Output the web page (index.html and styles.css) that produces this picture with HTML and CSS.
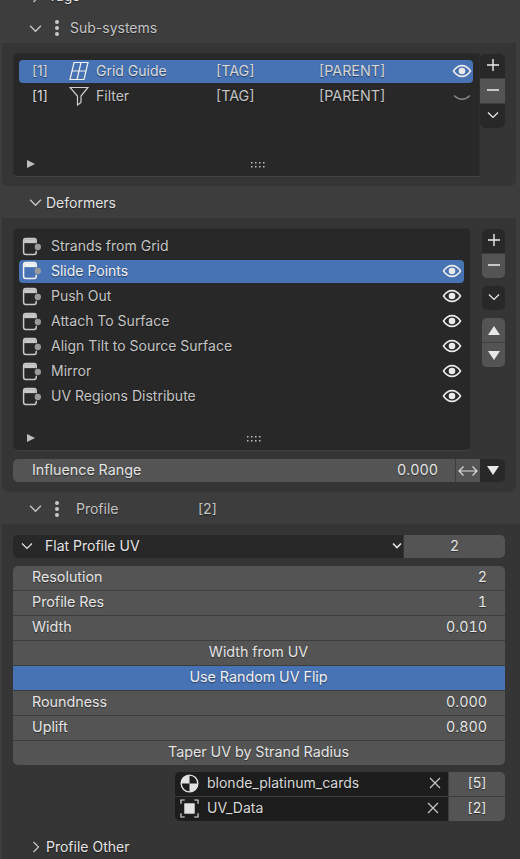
FILE: index.html
```html
<!DOCTYPE html>
<html lang="en">
  <head>
    <meta charset="utf-8" />
    <meta name="viewport" content="width=device-width, initial-scale=1.0" />
    <title>Hair Modifier Panel</title>
    <link rel="stylesheet" href="styles.css">
  </head>
  <body>
    <svg class="defs" width="0" height="0">
      <symbol id="eye" viewBox="0 0 20 14">
        <path d="M1.5 7C4 3.2 7 1.6 10 1.6S16 3.2 18.500 7C16 10.800 13 12.400 10 12.400S4 10.800 1.500 7Z" fill="none" stroke="currentColor" stroke-width="1.600"/>
        <circle cx="10" cy="7" r="3.300" fill="currentColor"/>
      </symbol>
      <symbol id="mod" viewBox="0 0 18 18">
        <path d="M13.500 6V3.500Q13.500 1.500 11.500 1.500H3.500Q1.500 1.500 1.500 3.500V14.500Q1.500 16.500 3.500 16.500H11.500Q13.500 16.500 13.500 14.500V13" fill="none" stroke="currentColor" stroke-width="1.400"/>
        <path d="M2 2H13V5.800H2Z" fill="currentColor"/>
        <circle cx="15" cy="9.500" r="3" class="mod-dot"/>
      </symbol>
      <symbol id="chev" viewBox="0 0 12 8">
        <path d="M1 1.500L6 6.500L11 1.500" fill="none" stroke="currentColor" stroke-width="1.200"/>
      </symbol>
      <symbol id="chev-small" viewBox="0 0 10 7">
        <path d="M1 1.500L5 5.500L9 1.500" fill="none" stroke="currentColor" stroke-width="1.600"/>
      </symbol>
      <symbol id="plus" viewBox="0 0 14 14">
        <path d="M1 7H13M7 1V13" fill="none" stroke="currentColor" stroke-width="1.400"/>
      </symbol>
      <symbol id="minus" viewBox="0 0 14 14">
        <path d="M1 7H13" fill="none" stroke="currentColor" stroke-width="1.400"/>
      </symbol>
      <symbol id="cross" viewBox="0 0 12 12">
        <path d="M1 1L11 11M11 1L1 11" fill="none" stroke="currentColor" stroke-width="1.200"/>
      </symbol>
      <symbol id="dots" viewBox="0 0 6 18">
        <circle cx="3" cy="3" r="2"/><circle cx="3" cy="9" r="2"/><circle cx="3" cy="15" r="2"/>
      </symbol>
      <symbol id="grip" viewBox="0 0 14 6">
        <path d="M0 0h1.500v1.500H0zM4 0h1.500v1.500H4zM8 0h1.500v1.500H8zM12 0h1.500v1.500H12zM0 4h1.500v1.500H0zM4 4h1.500v1.500H4zM8 4h1.500v1.500H8zM12 4h1.500v1.500H12z" fill="currentColor"/>
      </symbol>
    </svg>

    <div class="tags-head">
      <svg class="chev-right tags-chev" viewBox="0 0 8 12"><path d="M1.500 1L6.500 6L1.500 11" fill="none" stroke="currentColor" stroke-width="1.200"/></svg>
      <span class="tags-text">Tags</span>
    </div>

    <div class="head head-sub">
      <svg class="chev"><use href="#chev"/></svg>
      <svg class="dots"><use href="#dots"/></svg>
      <span class="muted sub-title">Sub-systems</span>
    </div>
    <section class="body body-sub">
      <div class="list-wrap">
        <div class="list list-sub">
          <div class="row sub-row selected">
            <span class="soft">[1]</span>
            <svg class="row-icon" viewBox="0 0 20 20"><path d="M5 1.500H19L15 18.500H1ZM12 1.500L8 18.500M3 10H17" fill="none" stroke="currentColor" stroke-width="1.200"/></svg>
            <span>Grid Guide</span>
            <span class="soft">[TAG]</span>
            <span class="soft">[PARENT]</span>
            <svg class="eye"><use href="#eye"/></svg>
          </div>
          <div class="row sub-row">
            <span>[1]</span>
            <svg class="row-icon" viewBox="0 0 20 20"><path d="M1 1.500H19L12 10V16.500L8.500 19V10Z" fill="none" stroke="currentColor" stroke-width="1.200"/></svg>
            <span class="muted">Filter</span>
            <span class="muted">[TAG]</span>
            <span class="muted">[PARENT]</span>
            <svg class="eye-off" viewBox="0 0 20 8"><path d="M2 1.500Q10 9 18 1.500" fill="none" stroke="currentColor" stroke-width="1.200"/></svg>
          </div>
          <div class="list-foot">
            <span class="tri-right"></span>
            <svg class="grip"><use href="#grip"/></svg>
          </div>
        </div>
        <div class="side side-sub">
          <div class="btn-group">
            <div class="btn dark"><svg class="btn-sign"><use href="#plus"/></svg></div>
            <div class="btn"><svg class="btn-sign"><use href="#minus"/></svg></div>
            <div class="btn dark"><svg class="btn-chev"><use href="#chev"/></svg></div>
          </div>
        </div>
      </div>
    </section>

    <div class="head head-def">
      <svg class="chev"><use href="#chev"/></svg>
      <span class="def-title">Deformers</span>
    </div>
    <section class="body body-def">
      <div class="list-wrap">
        <div class="list list-def">
          <div class="row def-row">
            <svg class="mod-icon"><use href="#mod"/></svg>
            <span class="muted">Strands from Grid</span>
          </div>
          <div class="row def-row selected">
            <svg class="mod-icon"><use href="#mod"/></svg>
            <span>Slide Points</span>
            <svg class="eye"><use href="#eye"/></svg>
          </div>
          <div class="row def-row">
            <svg class="mod-icon"><use href="#mod"/></svg>
            <span class="muted">Push Out</span>
            <svg class="eye"><use href="#eye"/></svg>
          </div>
          <div class="row def-row">
            <svg class="mod-icon"><use href="#mod"/></svg>
            <span class="muted">Attach To Surface</span>
            <svg class="eye"><use href="#eye"/></svg>
          </div>
          <div class="row def-row">
            <svg class="mod-icon"><use href="#mod"/></svg>
            <span class="muted">Align Tilt to Source Surface</span>
            <svg class="eye"><use href="#eye"/></svg>
          </div>
          <div class="row def-row">
            <svg class="mod-icon"><use href="#mod"/></svg>
            <span class="muted">Mirror</span>
            <svg class="eye"><use href="#eye"/></svg>
          </div>
          <div class="row def-row">
            <svg class="mod-icon"><use href="#mod"/></svg>
            <span class="muted">UV Regions Distribute</span>
            <svg class="eye"><use href="#eye"/></svg>
          </div>
          <div class="list-foot">
            <span class="tri-right"></span>
            <svg class="grip"><use href="#grip"/></svg>
          </div>
        </div>
        <div class="side side-def">
          <div class="btn-group">
            <div class="btn dark"><svg class="btn-sign"><use href="#plus"/></svg></div>
            <div class="btn"><svg class="btn-sign"><use href="#minus"/></svg></div>
          </div>
          <div class="btn-group">
            <div class="btn dark"><svg class="btn-chev"><use href="#chev"/></svg></div>
          </div>
          <div class="btn-group">
            <div class="btn"><span class="tri-up"></span></div>
            <div class="btn"><span class="tri-down"></span></div>
          </div>
        </div>
      </div>
      <div class="influence">
        <div class="field">
          <span>Influence Range</span>
          <span>0.000</span>
        </div>
        <div class="range-btn">
          <svg viewBox="0 0 20 12" width="20" height="12"><path d="M1 6H19M5.500 1.500L1 6L5.500 10.500M14.500 1.500L19 6L14.500 10.500" fill="none" stroke="currentColor" stroke-width="1.200"/></svg>
        </div>
        <div class="range-drop"><span class="tri-down"></span></div>
      </div>
    </section>

    <div class="head head-profile">
      <svg class="chev"><use href="#chev"/></svg>
      <svg class="dots"><use href="#dots"/></svg>
      <span class="muted profile-title">Profile</span>
      <span class="muted">[2]</span>
    </div>
    <section class="body body-profile">
      <div class="profile-select">
        <div class="select">
          <svg class="select-chev"><use href="#chev"/></svg>
          <span>Flat Profile UV</span>
          <svg class="select-end"><use href="#chev-small"/></svg>
        </div>
        <div class="select-count">2</div>
      </div>
      <div class="stack">
        <div class="stack-row"><span>Resolution</span><span>2</span></div>
        <div class="stack-row"><span>Profile Res</span><span>1</span></div>
        <div class="stack-row"><span>Width</span><span>0.010</span></div>
        <div class="stack-row center">Width from UV</div>
        <div class="stack-row center on">Use Random UV Flip</div>
        <div class="stack-row"><span>Roundness</span><span>0.000</span></div>
        <div class="stack-row"><span>Uplift</span><span>0.800</span></div>
        <div class="stack-row center">Taper UV by Strand Radius</div>
      </div>
      <div class="data">
        <div class="data-row">
          <div class="data-name">
            <svg class="data-icon" viewBox="0 0 20 20"><circle cx="10" cy="10" r="8.800" fill="none" stroke="currentColor" stroke-width="1.400"/><path d="M10 1.200A8.800 8.800 0 0 0 1.200 10H10ZM10 10V18.800A8.800 8.800 0 0 0 18.800 10Z" fill="currentColor"/></svg>
            <span class="data-label">blonde_platinum_cards</span>
            <svg class="data-x"><use href="#cross"/></svg>
          </div>
          <div class="data-count">[5]</div>
        </div>
        <div class="data-row">
          <div class="data-name">
            <svg class="data-icon" viewBox="0 0 20 20"><path d="M1 5V1H5M15 1H19V5M19 15V19H15M5 19H1V15" fill="none" stroke="currentColor" stroke-width="1.200"/><rect x="4.500" y="4.500" width="11" height="11" fill="currentColor"/></svg>
            <span class="data-label">UV_Data</span>
            <svg class="data-x uv-x"><use href="#cross"/></svg>
          </div>
          <div class="data-count">[2]</div>
        </div>
      </div>
      <div class="other">
        <svg class="chev-right" viewBox="0 0 8 12"><path d="M1.500 1L6.500 6L1.500 11" fill="none" stroke="currentColor" stroke-width="1.200"/></svg>
        <span>Profile Other</span>
      </div>
    </section>
  </body>
</html>
```

FILE: styles.css
```css
html,
body {
  margin: 0;
  height: 859px;
  overflow: hidden;
}

body {
  background-color: #3d3d3d;
  color: #e4e4e4;
  font-family: Inter, "Liberation Sans", sans-serif;
  font-size: 14px;
  line-height: 18px;
  text-shadow: 0 1px 1px rgba(0, 0, 0, 0.45);
}

svg {
  flex: none;
}

.defs {
  position: absolute;
}

.mod-dot {
  fill: #9a9a9a;
}

.muted {
  color: #c4c4c4;
}

.soft {
  color: #d6d6d6;
}

/* panel headers */
.tags-head {
  display: flex;
  height: 16px;
  overflow: hidden;
  padding-left: 32px;
}

.tags-chev {
  margin-top: -9px;
}

.tags-text {
  display: block;
  margin: -13px 0 0 8px;
}

.head {
  display: flex;
  align-items: center;
  padding-left: 29px;
  box-sizing: border-box;
}

.head-sub {
  height: 27px;
  padding-bottom: 3px;
}

.head-def {
  height: 32px;
  padding-top: 1px;
}

.head-profile {
  height: 32px;
  padding-top: 1px;
}

.chev {
  width: 13px;
  height: 9px;
  color: #c8c8c8;
}

.dots {
  width: 6px;
  height: 18px;
  margin-left: 12px;
  fill: #c8c8c8;
}

.sub-title {
  margin-left: 10px;
}

.def-title {
  margin-left: 4px;
}

.profile-title {
  margin-left: 16px;
  width: 122px;
}

/* panel bodies */
.body {
  margin: 0 4px 0 2px;
  background-color: #353535;
  border-radius: 0 0 6px 6px;
  padding: 10px 11px 0;
}

.body-sub {
  height: 143px;
  box-sizing: border-box;
}

.body-def {
  height: 274px;
  box-sizing: border-box;
}

.body-profile {
  height: 335px;
  box-sizing: border-box;
  border-radius: 0;
  margin-right: 0;
  padding-right: 15px;
}

.list-wrap {
  display: flex;
}

.list {
  box-sizing: border-box;
  background-color: #282828;
  border: 1px solid #2e2e2e;
  border-bottom-color: #434343;
  border-radius: 5px;
  padding: 6px 6px 0 5px;
  position: relative;
}

.list-sub {
  width: 468px;
  height: 124px;
  border-radius: 5px 0 0 5px;
}

.list-def {
  width: 458px;
  height: 223px;
  padding-top: 6px;
}

.row {
  display: flex;
  align-items: center;
  box-sizing: border-box;
  height: 24px;
  padding-bottom: 2px;
  margin-bottom: 1px;
  border-radius: 4px;
}

.selected {
  background-color: #4772b3;
  color: #f2f2f2;
  height: 23px;
  margin-bottom: 2px;
}

.selected .mod-dot {
  fill: #a9c4ee;
}

.sub-row {
  display: grid;
  grid-template-columns: 37px 27px 121px 103px 1fr 21px;
  padding-left: 13px;
  color: #dcdcdc;
}

.sub-row span:nth-of-type(3),
.sub-row span:nth-of-type(4) {
  font-size: 14.3px;
  margin-left: -1px;
}

.row-icon {
  width: 20px;
  height: 20px;
  color: #cfcfcf;
}

.selected .row-icon {
  color: #f2f2f2;
}

.eye {
  width: 20px;
  height: 14px;
  color: #eaeaea;
}

.eye-off {
  width: 20px;
  height: 8px;
  color: #8a8a8a;
  margin-top: 3px;
}

.def-row {
  padding-left: 3px;
  padding-right: 2px;
}

.def-row > span {
  margin-left: 10px;
  flex: 1;
}

.mod-icon {
  width: 19px;
  height: 19px;
  color: #c8c8c8;
}

.selected .mod-icon {
  color: #f2f2f2;
}

.list-foot {
  position: absolute;
  left: 13px;
  right: 0;
  bottom: 8px;
  height: 8px;
}

.tri-right {
  position: absolute;
  left: 0;
  top: 0;
  border-left: 8px solid #bdbdbd;
  border-top: 4px solid transparent;
  border-bottom: 4px solid transparent;
}

.grip {
  position: absolute;
  left: 50%;
  top: 2px;
  width: 14px;
  height: 6px;
  margin-left: -2px;
  color: #bdbdbd;
}

/* small buttons beside the lists */
.side {
  display: flex;
  flex-direction: column;
}

.side-sub {
  width: 25px;
  padding-top: 1px;
}

.side-def {
  width: 23px;
  margin-left: 11px;
  padding-top: 1px;
  gap: 8px;
}

.btn-group {
  border-radius: 5px;
  overflow: hidden;
  display: flex;
  flex-direction: column;
  gap: 1px;
  background-color: #3d3d3d;
}

.btn {
  display: flex;
  align-items: center;
  justify-content: center;
  height: 24px;
  background-color: #545454;
  color: #ececec;
}

.btn.dark {
  background-color: #282828;
}

.btn-sign {
  width: 14px;
  height: 14px;
  margin-bottom: 2px;
}

.btn-chev {
  width: 12px;
  height: 8px;
  margin-bottom: 2px;
}

.tri-up,
.tri-down {
  width: 0;
  height: 0;
  border-left: 6px solid transparent;
  border-right: 6px solid transparent;
}

.tri-up {
  border-bottom: 9px solid #e8e8e8;
}

.tri-down {
  border-top: 9px solid #e8e8e8;
}

/* influence range */
.influence {
  display: flex;
  height: 23px;
  margin-top: 8px;
}

.field {
  flex: 1;
  display: flex;
  justify-content: space-between;
  align-items: center;
  padding: 0 17px 2px 19px;
  background-color: #545454;
  border-radius: 5px 0 0 5px;
  font-size: 14.3px;
  font-variant-numeric: tabular-nums;
}

.range-btn {
  width: 24px;
  display: flex;
  align-items: center;
  justify-content: center;
  background-color: #545454;
  border-left: 1px solid #3d3d3d;
  color: #dcdcdc;
}

.range-drop {
  width: 25px;
  display: flex;
  align-items: center;
  justify-content: center;
  background-color: #282828;
  border-radius: 0 5px 5px 0;
}

/* profile */
.profile-select {
  display: flex;
  height: 23px;
  gap: 1px;
  margin-top: 1px;
}

.select {
  box-sizing: border-box;
  width: 390px;
  display: flex;
  align-items: center;
  padding: 0 0 2px 8px;
  background-color: #282828;
  border-radius: 5px 0 0 5px;
}

.select span {
  margin-left: 12px;
  flex: 1;
}

.select-chev {
  width: 12px;
  height: 8px;
}

.select-end {
  width: 10px;
  height: 7px;
  margin-right: 1px;
}

.select-count {
  flex: 1;
  text-align: center;
  line-height: 21px;
  background-color: #545454;
  border-radius: 0 5px 5px 0;
}

.stack {
  margin-top: 8px;
  border-radius: 5px;
  overflow: hidden;
  display: flex;
  flex-direction: column;
  gap: 1px;
  background-color: #3d3d3d;
}

.stack-row {
  display: flex;
  justify-content: space-between;
  align-items: center;
  box-sizing: border-box;
  height: 24px;
  padding: 0 18px 2px 19px;
  background-color: #545454;
  font-size: 14.3px;
  font-variant-numeric: tabular-nums;
}

.stack-row.center {
  justify-content: center;
  padding-right: 19px;
  padding-left: 18px;
}

.stack-row.on {
  background-color: #4772b3;
  color: #f2f2f2;
}

.data {
  margin: 7px 0 0 162px;
  border-radius: 5px;
  overflow: hidden;
  display: flex;
  flex-direction: column;
  gap: 1px;
  background-color: #3d3d3d;
}

.data-row {
  display: flex;
  height: 24px;
}

.data-name {
  width: 273px;
  display: flex;
  align-items: center;
  padding: 0 0 2px 5px;
  box-sizing: border-box;
  background-color: #1d1d1d;
}

.data-icon {
  width: 19px;
  height: 19px;
  color: #e2e2e2;
}

.data-label {
  margin-left: 8px;
  flex: 1;
  color: #d8d8d8;
}

.data-x {
  width: 12px;
  height: 12px;
  margin-right: 7px;
  color: #c8c8c8;
}

.uv-x {
  margin-right: 9px;
}

.data-count {
  flex: 1;
  margin-left: 1px;
  text-align: center;
  line-height: 22px;
  background-color: #545454;
}

.other {
  display: flex;
  align-items: center;
  margin: 17px 0 0 19px;
}

.chev-right {
  width: 8px;
  height: 12px;
  color: #c8c8c8;
}

.other span {
  margin-left: 6px;
}
```
